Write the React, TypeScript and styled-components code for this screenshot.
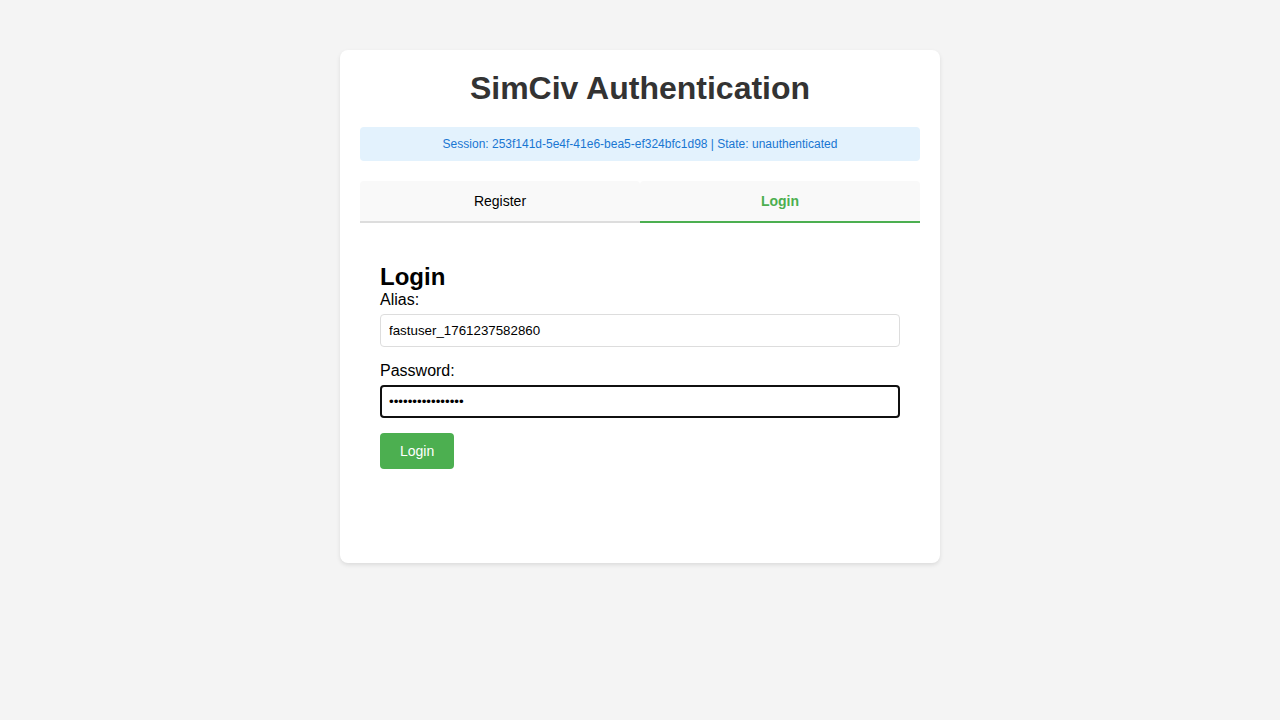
import React, { useState } from 'react'
import styled, { createGlobalStyle } from 'styled-components'

const GlobalStyle = createGlobalStyle`
    body {
        margin: 0;
        background-color: #f4f4f4;
        font-family: "Liberation Sans", Arial, sans-serif;
    }
`

type Tab = 'register' | 'login'

function App() {
    const [tab, setTab] = useState<Tab>('login')

    return (
        <>
            <GlobalStyle />
            <Card>
                <Title>SimCiv Authentication</Title>
                <SessionBox>
                    Session: 253f141d-5e4f-41e6-bea5-ef324bfc1d98 | State: unauthenticated
                </SessionBox>
                <Tabs>
                    <TabButton $active={tab === 'register'} onClick={() => setTab('register')}>Register</TabButton>
                    <TabButton $active={tab === 'login'} onClick={() => setTab('login')}>Login</TabButton>
                </Tabs>
                <Panel>
                    <PanelTitle>Login</PanelTitle>
                    <FormGroup>
                        <Label>Alias:</Label>
                        <Input type="text" defaultValue="fastuser_1761237582860" />
                    </FormGroup>
                    <FormGroup>
                        <Label>Password:</Label>
                        <Input type="password" defaultValue="passwordpassword" $focused />
                    </FormGroup>
                    <SubmitButton>Login</SubmitButton>
                </Panel>
            </Card>
        </>
    )
}

const Card = styled.div`
    width: 560px;
    margin: 50px auto;
    padding: 20px;
    background-color: #fff;
    border-radius: 8px;
    box-shadow: 0 2px 4px rgba(0, 0, 0, 0.1);
`
const Title = styled.h1`
    margin: 0 0 20px;
    font-size: 32px;
    line-height: 37px;
    font-weight: bold;
    text-align: center;
    color: #333;
`
const SessionBox = styled.div`
    padding: 10px;
    margin-bottom: 20px;
    background-color: #e3f2fd;
    color: #1976d2;
    font-size: 12px;
    line-height: 14px;
    text-align: center;
    border-radius: 4px;
`
const Tabs = styled.div`
    display: flex;
`
const TabButton = styled.button<{ $active?: boolean }>`
    flex: 1;
    padding: 12px;
    font-family: inherit;
    font-size: 14px;
    line-height: 16px;
    background-color: #f9f9f9;
    border: none;
    border-radius: 4px 4px 0 0;
    border-bottom: 2px solid ${({ $active }) => ($active ? '#4caf50' : '#ddd')};
    color: ${({ $active }) => ($active ? '#4caf50' : '#000')};
    font-weight: ${({ $active }) => ($active ? 'bold' : 'normal')};
    cursor: pointer;
`
const Panel = styled.div`
    padding: 20px 20px 74px;
`
const PanelTitle = styled.h2`
    margin: 20px 0 0;
    font-size: 24px;
    line-height: 28px;
    font-weight: bold;
`
const FormGroup = styled.div`
    margin-bottom: 15px;
`
const Label = styled.label`
    display: block;
    margin-bottom: 5px;
    font-size: 16px;
    line-height: 18px;
`
const Input = styled.input<{ $focused?: boolean }>`
    display: block;
    box-sizing: border-box;
    width: 100%;
    height: 33px;
    padding: ${({ $focused }) => ($focused ? '7px' : '8px')};
    font-family: "Liberation Sans", Arial, sans-serif;
    font-size: 13.33px;
    color: #000;
    border: ${({ $focused }) => ($focused ? '2px solid #101010' : '1px solid #ddd')};
    border-radius: 4px;
    outline: none;
`
const SubmitButton = styled.button`
    padding: 10px 20px;
    font-family: inherit;
    font-size: 14px;
    line-height: 16px;
    background-color: #4caf50;
    color: #fff;
    border: none;
    border-radius: 4px;
    cursor: pointer;
`

export default App
